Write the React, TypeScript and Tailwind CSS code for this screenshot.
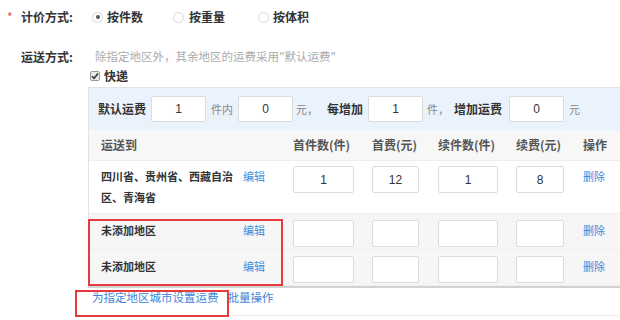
import React from "react";

const font = { fontFamily: '"Noto Sans CJK SC", "Noto Sans", sans-serif' };

function Radio({ checked }: { checked?: boolean }) {
  return (
    <span className="flex h-[11px] w-[11px] items-center justify-center rounded-full border border-[#dedede] bg-white shadow-[0_0_1px_rgba(0,0,0,0.08)]">
      {checked ? <span className="h-[4px] w-[4px] rounded-full bg-[#555]" /> : null}
    </span>
  );
}

function Box({ w, h, value, className }: { w: string; h: string; value?: string; className?: string }) {
  return (
    <div
      className={`${w} ${h} ${className ?? ""} flex shrink-0 items-center justify-center rounded-[2px] border border-[#dcdcdc] bg-white text-[12px] text-[#333]`}
      style={{ fontFamily: '"Liberation Sans", Arial, sans-serif' }}
    >
      {value}
    </div>
  );
}

function BodyRow({
  region,
  vals,
  tall,
  gray,
}: {
  region: string;
  vals: string[];
  tall?: boolean;
  gray?: boolean;
}) {
  return (
    <div
      className={`flex items-start border-b border-[#eeeeee] ${tall ? "h-[53px] pt-[5px]" : "h-[36px] pt-[6px]"} ${gray ? "bg-[#f6f6f6]" : "bg-white"}`}
    >
      <div className="flex w-[204px] shrink-0 items-start pl-[12px]">
        <div className="w-[136px] text-[11px] font-bold leading-[21px] text-[#333]">{region}</div>
        <div className="ml-[6px] text-[11px] leading-[21px] text-[#3d8be0]">编辑</div>
      </div>
      <div className="w-[79px] shrink-0">
        <Box w="w-[61px]" h="h-[27px]" value={vals[0]} />
      </div>
      <div className="w-[66px] shrink-0">
        <Box w="w-[47px]" h="h-[27px]" value={vals[1]} />
      </div>
      <div className="w-[78px] shrink-0">
        <Box w="w-[60px]" h="h-[27px]" value={vals[2]} />
      </div>
      <div className="w-[67px] shrink-0">
        <Box w="w-[48px]" h="h-[27px]" value={vals[3]} />
      </div>
      <div className="text-[11px] leading-[21px] text-[#3d8be0]">删除</div>
    </div>
  );
}

export default function App() {
  return (
    <div className="relative h-[320px] w-[620px] overflow-hidden bg-white text-[#333]" style={font}>
      {/* 计价方式 */}
      <div className="flex h-[34px] items-center">
        <span className="w-[21px] pl-[7px] text-[12px] text-[#e5484d]">*</span>
        <span className="w-[71px] text-[12px] font-bold">计价方式:</span>
        <div className="flex w-[81px] items-center">
          <Radio checked />
          <span className="ml-[4px] text-[12px] font-bold">按件数</span>
        </div>
        <div className="flex w-[85px] items-center">
          <Radio />
          <span className="ml-[5px] text-[12px] font-bold">按重量</span>
        </div>
        <div className="flex items-center">
          <Radio />
          <span className="ml-[4px] text-[12px] font-bold">按体积</span>
        </div>
      </div>

      {/* 运送方式 */}
      <div className="mt-[13px] flex h-[20px] items-center">
        <span className="w-[21px]" />
        <span className="w-[74px] text-[12px] font-bold">运送方式:</span>
        <span className="text-[11.5px] text-[#aaaaaa]">除指定地区外，其余地区的运费采用"默认运费"</span>
      </div>

      {/* 快递 */}
      <div className="flex h-[18px] items-center pl-[90px]">
        <span className="flex h-[10px] w-[10px] items-center justify-center rounded-[2px] border border-[#9a9a9a] bg-[#e8e8e8]">
          <svg width="8" height="8" viewBox="0 0 8 8">
            <path d="M1 4.2 L3.1 6.3 L7 1.5" fill="none" stroke="#333" strokeWidth="1.5" />
          </svg>
        </span>
        <span className="ml-[4px] text-[12px] font-bold">快递</span>
      </div>

      {/* table */}
      <div className="ml-[88px] mt-[2px] w-[560px] border-l border-t border-[#e2e2e2] border-b-2 border-b-[#d2d2d2]">
        <div className="flex h-[42px] items-center bg-[#eaf2fc] pl-[9px] text-[12px]">
          <span className="w-[53px] shrink-0 font-bold">默认运费</span>
          <Box w="w-[55px]" h="h-[26px]" value="1" />
          <span className="w-[32px] shrink-0 pl-[5px] text-[11px] text-[#888]">件内</span>
          <Box w="w-[55px]" h="h-[26px]" value="0" />
          <span className="w-[34px] shrink-0 pl-[3px] text-[11px] text-[#888]">元，</span>
          <span className="w-[41px] shrink-0 font-bold">每增加</span>
          <Box w="w-[55px]" h="h-[26px]" value="1" />
          <span className="w-[31px] shrink-0 pl-[4px] text-[11px] text-[#888]">件，</span>
          <span className="w-[55px] shrink-0 font-bold">增加运费</span>
          <Box w="w-[55px]" h="h-[26px]" value="0" />
          <span className="pl-[5px] text-[11px] text-[#888]">元</span>
        </div>
        <div className="flex h-[31px] items-center border-b border-[#eeeeee] bg-[#f7f7f7] text-[12px] font-bold text-[#555]">
          <span className="w-[204px] shrink-0 pl-[12px]">运送到</span>
          <span className="w-[79px] shrink-0">首件数(件)</span>
          <span className="w-[66px] shrink-0">首费(元)</span>
          <span className="w-[78px] shrink-0">续件数(件)</span>
          <span className="w-[67px] shrink-0">续费(元)</span>
          <span>操作</span>
        </div>
        <BodyRow region="四川省、贵州省、西藏自治区、青海省" vals={["1", "12", "1", "8"]} tall />
        <BodyRow region="未添加地区" vals={["", "", "", ""]} gray />
        <BodyRow region="未添加地区" vals={["", "", "", ""]} gray />
      </div>

      {/* link row */}
      <div className="ml-[88px] flex h-[28px] items-start border-b border-[#eeeeee] pl-[4px] pt-[1px] text-[11.5px]">
        <span className="text-[#3d86d8]">为指定地区城市设置运费</span>
        <span className="ml-[9px] text-[#3d86d8]">批量操作</span>
      </div>

      {/* annotation boxes */}
      <div className="absolute left-[88px] top-[219px] h-[67px] w-[195px] border-2 border-[#e8393f]" />
      <div className="absolute left-[75px] top-[290px] h-[27px] w-[154px] border-2 border-[#e8393f]" />
    </div>
  );
}
